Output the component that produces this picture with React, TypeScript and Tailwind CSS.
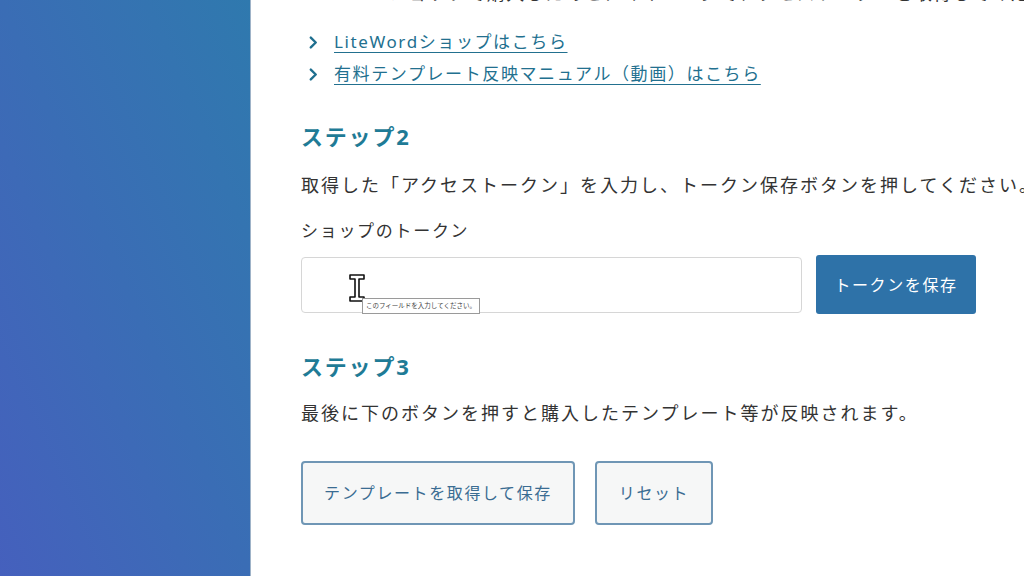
const jp = { fontFamily: '"Noto Sans", "Noto Sans CJK JP", sans-serif' };

function Chevron() {
  return (
    <svg viewBox="0 0 10 14" className="h-[13px] w-[9px] shrink-0" fill="none">
      <path d="M2 1.5 7.5 7 2 12.5" stroke="#1f6f8f" strokeWidth="2.6" strokeLinecap="round" strokeLinejoin="round" />
    </svg>
  );
}

function IBeam() {
  return (
    <svg viewBox="0 0 18 30" className="h-[30px] w-[18px]">
      <path
        d="M2 2h14v4h-5v18h5v4H2v-4h5V6H2z"
        fill="#fff"
        stroke="#111"
        strokeWidth="1.6"
        strokeLinejoin="round"
      />
    </svg>
  );
}

export default function App() {
  const links = ['LiteWordショップはこちら', '有料テンプレート反映マニュアル（動画）はこちら'];

  return (
    <div className="flex h-[576px] w-[1024px] overflow-hidden bg-white" style={jp}>
      <aside className="w-[251px] shrink-0 border-r border-[#9fb3c8] bg-gradient-to-tr from-[#4560bd] via-[#3a6db5] to-[#2f79ae]" />

      <main className="min-w-0 flex-1 overflow-hidden pl-[50px] text-[#333]">
        <p className="mt-[-19px] h-[24px] whitespace-nowrap text-[18px] leading-[24px] tracking-[1.5px]">
          LiteWordショップで購入したあと、マイページでアクセストークンを取得してください。
        </p>

        <ul className="mt-[21px]">
          {links.map((t) => (
            <li key={t} className="flex h-[32px] items-center gap-[16px] pl-[8px]">
              <Chevron />
              <a
                href="#"
                className="whitespace-nowrap text-[17px] leading-[32px] tracking-[1.6px] text-[#22708f] underline underline-offset-[4px]"
              >
                {t}
              </a>
            </li>
          ))}
        </ul>

        <h2 className="mt-[30px] text-[22px] font-bold leading-[32px] tracking-[1.8px] text-[#1f7b96]">ステップ2</h2>
        <p className="mt-[18px] whitespace-nowrap text-[18px] leading-[30px] tracking-[2px]">
          取得した「アクセストークン」を入力し、トークン保存ボタンを押してください。
        </p>

        <label className="mt-[17px] block text-[17px] leading-[28px] tracking-[1.7px]">ショップのトークン</label>
        <div className="mt-[10px] flex items-center gap-[14px]">
          <div className="relative h-[56px] w-[501px] rounded-[4px] border border-[#d6d6d6] bg-white">
            <div className="absolute left-[46px] top-[15px]">
              <IBeam />
            </div>
            <div className="absolute left-[60px] top-[40px] whitespace-nowrap border border-[#9a9a9a] bg-white px-[3px] text-[6.5px] leading-[14px] text-[#444]">
              このフィールドを入力してください。
            </div>
          </div>
          <button className="h-[59px] w-[160px] rounded-[3px] bg-[#2e72a8] text-[16px] tracking-[1.6px] text-white">
            トークンを保存
          </button>
        </div>

        <h2 className="mt-[36px] text-[22px] font-bold leading-[32px] tracking-[1.8px] text-[#1f7b96]">ステップ3</h2>
        <p className="mt-[16px] whitespace-nowrap text-[18px] leading-[30px] tracking-[2px]">
          最後に下のボタンを押すと購入したテンプレート等が反映されます。
        </p>

        <div className="mt-[33px] flex gap-[20px]">
          <button className="h-[64px] w-[274px] rounded-[4px] border-2 border-[#6f96b5] bg-[#f6f7f7] text-[16px] tracking-[1.6px] text-[#3a6c92]">
            テンプレートを取得して保存
          </button>
          <button className="h-[64px] w-[118px] rounded-[4px] border-2 border-[#6f96b5] bg-[#f6f7f7] text-[16px] tracking-[1.6px] text-[#3a6c92]">
            リセット
          </button>
        </div>
      </main>
    </div>
  );
}
